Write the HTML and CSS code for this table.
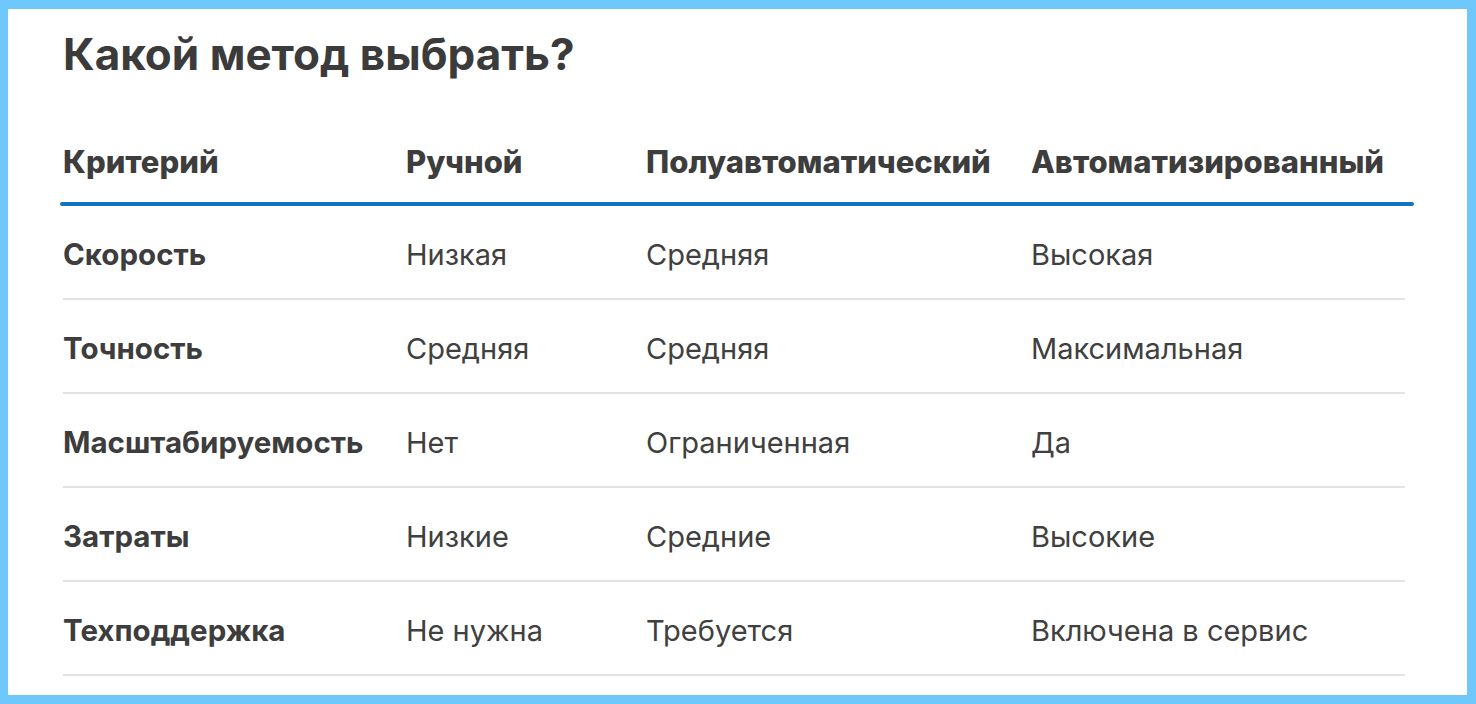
FILE: index.html
```html
<!DOCTYPE html>
<html lang="ru">
<head>
    <meta charset="UTF-8">
    <meta name="viewport" content="width=device-width, initial-scale=1.0">
    <title>Какой метод выбрать?</title>
    <link rel="stylesheet" href="styles.css">
</head>
<body>

<div class="panel">
    <h2>Какой метод выбрать?</h2>

    <div class="compare">
        <div class="row head">
            <div class="cell">Критерий</div>
            <div class="cell">Ручной</div>
            <div class="cell">Полуавтоматический</div>
            <div class="cell">Автоматизированный</div>
        </div>
        <div class="rule"></div>

        <div class="row">
            <div class="cell label">Скорость</div>
            <div class="cell">Низкая</div>
            <div class="cell">Средняя</div>
            <div class="cell">Высокая</div>
        </div>
        <div class="row">
            <div class="cell label">Точность</div>
            <div class="cell">Средняя</div>
            <div class="cell">Средняя</div>
            <div class="cell">Максимальная</div>
        </div>
        <div class="row">
            <div class="cell label">Масштабируемость</div>
            <div class="cell">Нет</div>
            <div class="cell">Ограниченная</div>
            <div class="cell">Да</div>
        </div>
        <div class="row">
            <div class="cell label">Затраты</div>
            <div class="cell">Низкие</div>
            <div class="cell">Средние</div>
            <div class="cell">Высокие</div>
        </div>
        <div class="row">
            <div class="cell label">Техподдержка</div>
            <div class="cell">Не нужна</div>
            <div class="cell">Требуется</div>
            <div class="cell">Включена в сервис</div>
        </div>
    </div>
</div>

</body>
</html>
```

FILE: styles.css
```css
body {
    margin: 0;
    padding: 9px 9px 9px 8px;
    background-color: #6ec8fc;
    font-family: Inter, "Noto Sans", sans-serif;
    color: #404040;
}
.panel {
    background-color: white;
    height: 686px;
    overflow: hidden;
    padding: 0 62px 0 55px;
}
.panel h2 {
    margin: 0;
    padding-top: 14px;
    font-size: 44px;
    font-weight: 700;
    line-height: 62px;
    color: #3b3b3b;
}
.compare {
    margin-top: 33px;
}
.row {
    display: grid;
    grid-template-columns: 343px 240px 385px 1fr;
    box-sizing: border-box;
    height: 94px;
    padding-top: 4px;
    border-bottom: 2px solid #e3e3e3;
    font-size: 29px;
}
.row.head {
    height: 88px;
    padding-top: 0;
    font-size: 31px;
    font-weight: 800;
    color: #3d3d3d;
}
.cell {
    display: flex;
    align-items: center;
    white-space: nowrap;
}
.cell.label {
    font-size: 29.5px;
    font-weight: 700;
    color: #3d3d3d;
}
.rule {
    height: 4px;
    margin: -4px -9px 0 -3px;
    border-radius: 2px;
    background-color: #1273c0;
}
```
